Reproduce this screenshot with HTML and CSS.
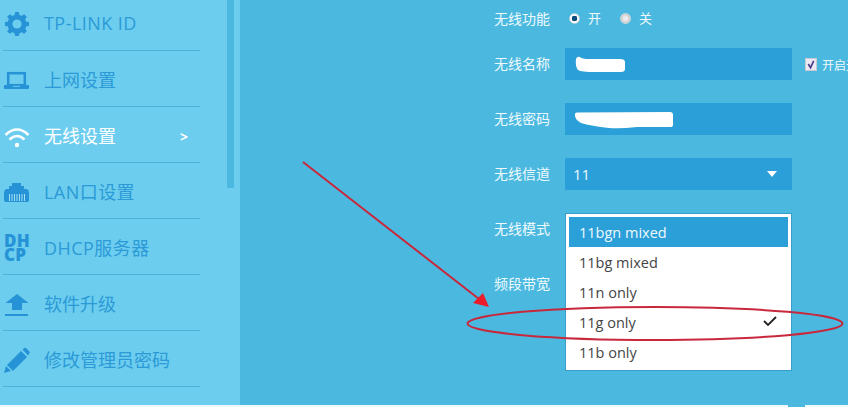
FILE: index.html
```html
<!DOCTYPE html>
<html lang="zh">
<head>
<meta charset="utf-8">
<title>无线设置</title>
<link rel="stylesheet" href="styles.css">
</head>
<body>
<div class="page">
  <aside class="sidebar">
    <div class="scrollbar"></div>
    <ul class="menu">
      <li class="menu-item">
        <svg class="icon" viewBox="0 0 26 26"><g fill="#2593d5"><rect x="10.800" y="1" width="4.400" height="24" rx="1"/><rect x="1" y="10.800" width="24" height="4.400" rx="1"/><rect x="10.800" y="1" width="4.400" height="24" rx="1" transform="rotate(45 13 13)"/><rect x="10.800" y="1" width="4.400" height="24" rx="1" transform="rotate(-45 13 13)"/><circle cx="13" cy="13" r="9.500"/></g><circle cx="13" cy="13" r="4.600" fill="#6ccdef"/></svg>
        <span class="menu-label wide">TP-LINK ID</span>
      </li>
      <li class="menu-item">
        <svg class="icon" viewBox="0 0 26 26"><rect x="4.200" y="6.200" width="16.600" height="12" fill="none" stroke="#2593d5" stroke-width="2.500"/><path d="M0 18h25v3.200q0 .8-1 .8H1q-1 0-1-.8z" fill="#2593d5"/><rect x="9" y="18.800" width="7" height="1" fill="#6ccdef"/></svg>
        <span class="menu-label">上网设置</span>
      </li>
      <li class="menu-item active">
        <svg class="icon" viewBox="0 0 26 26"><g fill="none" stroke="#fff" stroke-width="2.600"><path d="M1.500 12Q13 1 24.500 12"/><path d="M5.500 16.500Q13 9.500 20.500 16.500"/></g><circle cx="13" cy="22" r="2.200" fill="#fff"/></svg>
        <span class="menu-label">无线设置</span>
        <span class="chevron">&gt;</span>
      </li>
      <li class="menu-item">
        <svg class="icon" viewBox="0 0 26 26"><path d="M8 4H17V7H20V10H23Q25 11 25 14V21Q25 23 23 23H2Q0 23 0 21V14Q0 11 2 10H5V7H8Z" fill="#2593d5"/><path d="M5.500 15v7M8 15v7M10.500 15v7M13 15v7M15.500 15v7M18 15v7M20.500 15v7" stroke="#a6dff2" stroke-width="1"/></svg>
        <span class="menu-label wide">LAN口设置</span>
      </li>
      <li class="menu-item">
        <span class="icon dhcp">DH<br>CP</span>
        <span class="menu-label wide">DHCP服务器</span>
      </li>
      <li class="menu-item">
        <svg class="icon" viewBox="0 0 26 26"><path d="M13 3L24.500 12H18V19H8V12H1.500Z" fill="#2593d5"/><rect x="1" y="23" width="23" height="2" fill="#2593d5"/></svg>
        <span class="menu-label">软件升级</span>
      </li>
      <li class="menu-item">
        <svg class="icon" viewBox="0 0 26 26"><g fill="#2593d5"><path d="M0 26L2 19L7 24Z"/><path d="M3 18L17 4L23 10L9 24Z"/><path d="M18.500 2.500L20.500 .8Q21 .5 22 1L25.500 4.500Q26 5.500 25.500 6L24 8.500Z"/></g></svg>
        <span class="menu-label">修改管理员密码</span>
      </li>
    </ul>
  </aside>
  <main class="content">
    <form class="form">
      <div class="row row-radio">
        <span class="label">无线功能</span>
        <span class="radio checked"></span><span class="radio-text">开</span>
        <span class="radio"></span><span class="radio-text">关</span>
      </div>
      <div class="row">
        <span class="label">无线名称</span>
        <div class="field">
          <svg class="mask" width="60" height="32" viewBox="0 0 60 32"><path d="M11 11Q12 8 15 9Q17 11 24 11H55Q60 11 60 14V21Q60 24 56 24H30Q16 24 13 22Q10 18 11 11Z" fill="#fff"/></svg>
        </div>
        <label class="check-line"><span class="checkbox"><svg width="11" height="11" viewBox="0 0 11 11"><path d="M2.500 5L5 9L8.500 1.500" fill="none" stroke="#4a3f8a" stroke-width="1.800"/></svg></span><span class="check-text">开启无线广播</span></label>
      </div>
      <div class="row">
        <span class="label">无线密码</span>
        <div class="field">
          <svg class="mask" width="110" height="32" viewBox="0 0 110 32"><path d="M10 11Q10 9 13 9.500L105 9Q108 9 108 12V22Q108 24 105 24H72Q55 26 44 25Q26 23 16 20Q9 16 10 11Z" fill="#fff"/></svg>
        </div>
      </div>
      <div class="row">
        <span class="label">无线信道</span>
        <div class="field select"><span class="field-value">11</span><span class="caret"></span></div>
      </div>
      <div class="row">
        <span class="label">无线模式</span>
      </div>
      <div class="row">
        <span class="label">频段带宽</span>
      </div>
    </form>
    <ul class="dropdown">
      <li class="option selected">11bgn mixed</li>
      <li class="option">11bg mixed</li>
      <li class="option">11n only</li>
      <li class="option">11g only<svg class="tick" width="14" height="10" viewBox="0 0 14 10"><path d="M1 5L5 9L13 1" fill="none" stroke="#222" stroke-width="1.800"/></svg></li>
      <li class="option">11b only</li>
    </ul>
  </main>
</div>
<footer class="strip"><span class="notch"></span></footer>
<svg class="annotation" width="848" height="407" viewBox="0 0 848 407">
  <path d="M303 162L479 299" stroke="#c8283c" stroke-width="2" fill="none"/>
  <path d="M489 307L473 303L483 293Z" fill="#ea1c2c"/>
  <ellipse cx="655" cy="323.500" rx="187.500" ry="16.500" fill="none" stroke="#c8283c" stroke-width="2"/>
</svg>
</body>
</html>
```

FILE: styles.css
```css
* { box-sizing: border-box; }
html, body { margin: 0; padding: 0; }
body {
  width: 848px;
  height: 407px;
  overflow: hidden;
  position: relative;
  background: #eef8fc;
  font-family: "Open Sans", "Noto Sans CJK SC", sans-serif;
}
.page { display: flex; height: 405px; }
.sidebar {
  position: relative;
  width: 240px;
  flex: none;
  background: #6ccdef;
  overflow: hidden;
}
.scrollbar {
  position: absolute;
  left: 227px;
  top: 0;
  width: 7px;
  height: 188px;
  background: #4bb9df;
}
.menu { list-style: none; margin: -5px 0 0 3px; padding: 0; width: 197px; }
.menu-item {
  display: flex;
  align-items: center;
  height: 56px;
  padding: 3px 12px 0 1px;
  border-bottom: 1px solid #4bb3d9;
  color: #2b9ad6;
  font-size: 18px;
}
.menu-item.active { color: #fff; }
.icon { width: 26px; height: 26px; flex: none; margin-right: 14px; }
.dhcp {
  display: block;
  font-family: "Open Sans", sans-serif;
  font-weight: 800;
  font-size: 17px;
  line-height: 14px;
  letter-spacing: .2px;
  color: #2593d5;
  height: 28px;
}
.menu-label { white-space: nowrap; margin-bottom: 2px; }
.wide { letter-spacing: .45px; }
.chevron { margin-left: auto; font-size: 14px; font-weight: 700; }
.content {
  position: relative;
  flex: 1;
  background: #4bb9df;
  padding: 12px 0 0 254px;
  color: #eef9fd;
  font-family: "Noto Sans CJK SC", sans-serif;
  font-size: 13px;
}
.form { display: flex; flex-direction: column; gap: 23px; }
.row { display: flex; align-items: center; height: 32px; white-space: nowrap; }
.row-radio { height: 13px; }
.label { width: 56px; margin: 0 15px 2px 0; flex: none; font-size: 14px; }
.radio {
  width: 11px;
  height: 11px;
  flex: none;
  margin: 0 8px 0 4px;
  border-radius: 50%;
  background: radial-gradient(circle, #ececec 0 30%, #adadad 100%);
  border: 1px solid #d2dade;
}
.radio.checked {
  background: radial-gradient(circle, #0b4f7e 0 42%, #fff 48%);
  border-color: #bcd0dc;
}
.radio-text { width: 25px; margin: 0 3px 2px 0; }
.field {
  position: relative;
  width: 227px;
  height: 32px;
  flex: none;
  background: #2b9fd8;
  overflow: hidden;
}
.mask { display: block; }
.select {
  display: flex;
  align-items: center;
  padding: 0 15px 0 8px;
  font-family: "Open Sans", sans-serif;
  font-size: 15px;
  justify-content: space-between;
}
.caret {
  width: 0;
  height: 0;
  border-left: 5px solid transparent;
  border-right: 5px solid transparent;
  border-top: 6px solid #fff;
}
.check-line { display: flex; align-items: center; margin-left: 13px; }
.checkbox {
  width: 12px;
  height: 13px;
  margin-right: 5px;
  flex: none;
  background: #ece9f4;
  border: 1px solid #c9c9d2;
  display: flex;
  align-items: center;
  justify-content: center;
}
.check-text { font-size: 12px; }
.dropdown {
  position: absolute;
  left: 325px;
  top: 213px;
  width: 227px;
  height: 158px;
  margin: 0;
  padding: 3px 3px 0;
  list-style: none;
  background: #fff;
  border: 1px solid #3a9cc9;
  font-family: "Open Sans", sans-serif;
  font-size: 14.500px;
  color: #444;
}
.option {
  position: relative;
  display: flex;
  align-items: center;
  height: 30px;
  padding-left: 10px;
}
.option.selected { background: #2b9fd8; color: #eef9fd; }
.tick { position: absolute; right: 11px; top: 9px; }
.strip { position: relative; height: 2px; background: #eef8fc; }
.notch {
  position: absolute;
  left: 788px;
  top: 0;
  width: 17px;
  height: 2px;
  background: #4bb9df;
}
.annotation { position: absolute; left: 0; top: 0; pointer-events: none; }
```
